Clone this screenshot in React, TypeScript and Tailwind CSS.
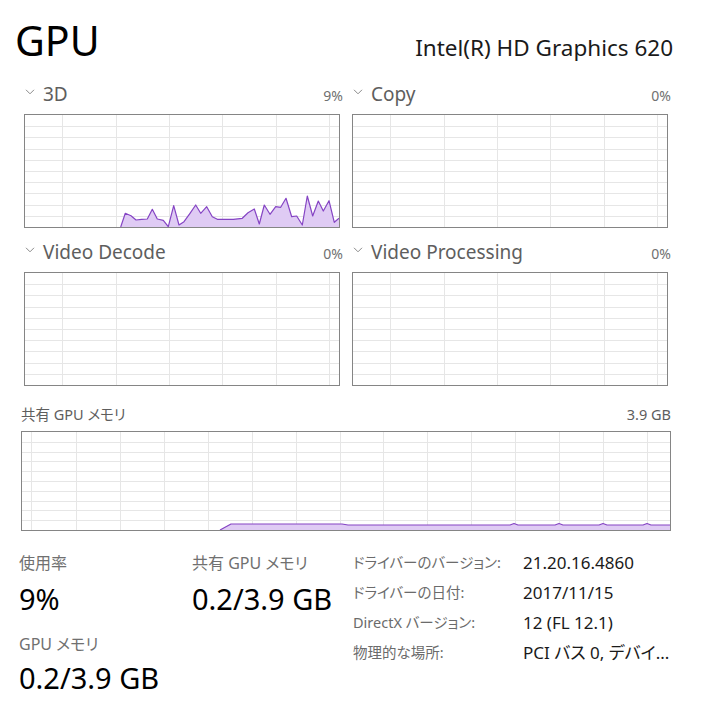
import React from "react";

// GPU performance page, Task Manager style

const SMALL_X = [37, 91, 144, 197, 251, 304];
const WIDE_X = [9, 54, 98, 142, 186, 230, 274, 318, 361, 405, 449, 493, 537, 581, 625];

const load3d: [number, number][] = [
  [95.7, 112], [100.3, 98.3], [106, 100.7], [111, 105], [116.7, 104.3], [122.3, 104],
  [127.3, 94.3], [132.3, 104], [138.3, 105.3], [143.3, 111.7], [148.7, 90.7], [154, 110],
  [159, 106.7], [165, 98.3], [170.7, 90], [175.7, 98.3], [181.7, 91.7], [187.3, 101.7],
  [192.3, 104.3], [208.3, 104.3], [217.3, 103.3], [223, 97.7], [229.3, 94], [234.3, 109],
  [239.3, 90], [245, 99.3], [250.7, 91.7], [255.7, 92.3], [261, 83.3], [266.7, 101.7],
  [271.7, 101], [277.3, 110], [282.3, 81], [287.7, 101], [293.3, 86], [298.3, 96],
  [304, 85.7], [309.3, 107.3], [314, 103.3],
];

const sharedMem: [number, number][] = [
  [198, 98], [209, 92], [320, 92], [326, 93], [488, 93], [492, 91.5], [496, 93], [533, 93],
  [537, 91.5], [541, 93], [577, 93], [581, 91.5], [585, 93], [621, 93], [625, 91.5],
  [629, 93], [648, 93],
];

const pts = (p: [number, number][]) => p.map(([x, y]) => `${x},${y}`).join(" ");

interface GridProps {
  w: number;
  h: number;
  xs: number[];
  rows: number;
  data?: [number, number][];
}

const Grid = ({ w, h, xs, rows, data }: GridProps) => (
  <svg width={w} height={h} className="block">
    {xs.map((x) => (
      <line key={"v" + x} x1={x + 0.5} x2={x + 0.5} y1={0} y2={h} stroke="#e6e6e6" strokeWidth={1} />
    ))}
    {Array.from({ length: rows - 1 }, (_, i) => {
      const y = Math.round(((i + 1) * h) / rows) + 0.5;
      return <line key={"h" + i} x1={0} x2={w} y1={y} y2={y} stroke="#e6e6e6" strokeWidth={1} />;
    })}
    {data && (
      <>
        <polygon
          points={pts([...data, [data[data.length - 1][0], h], [data[0][0], h]])}
          fill="#dfcbf4"
        />
        <polyline points={pts(data)} fill="none" stroke="#8544c4" strokeWidth={1.2} strokeLinejoin="round" />
      </>
    )}
  </svg>
);

const Chevron = () => (
  <svg width="10" height="6" viewBox="0 0 10 6" className="block mr-[8px] -translate-y-[6px]">
    <path d="M1 0.8 L5 4.8 L9 0.8" fill="none" stroke="#8a8a8a" strokeWidth="1" />
  </svg>
);

const EngineChart = ({ name, pct, data }: { name: string; pct: string; data?: [number, number][] }) => (
  <div className="flex flex-col">
    <div className="flex h-[34px] w-[319px] items-baseline justify-between pt-[2px] pl-[1px]">
      <div className="flex items-baseline">
        <Chevron />
        <span className="text-[19px] leading-[24px] text-[#5e5e5e]">{name}</span>
      </div>
      <span className="text-[14px] leading-[24px] text-[#707070]">{pct}</span>
    </div>
    <div className="w-[316px] h-[114px] border border-[#858585]">
      <Grid w={314} h={112} xs={SMALL_X} rows={10} data={data} />
    </div>
  </div>
);

const details = [
  ["ドライバーのバージョン:", "21.20.16.4860"],
  ["ドライバーの日付:", "2017/11/15"],
  ["DirectX バージョン:", "12 (FL 12.1)"],
  ["物理的な場所:", "PCI バス 0, デバイ..."],
];

export default function App() {
  return (
    <div className="w-[707px] h-[706px] bg-white overflow-hidden text-[#1a1a1a] font-['Noto_Sans','Noto_Sans_CJK_JP',sans-serif] [font-feature-settings:'palt']">
      <div className="flex h-[80px] items-baseline justify-between pl-[15px] pr-[34px]">
        <span className="mt-[19px] text-[41px] leading-[42px] text-black">GPU</span>
        <span className="text-[22.5px] leading-[28px] text-[#1a1a1a]">Intel(R) HD Graphics 620</span>
      </div>

      <div className="grid grid-cols-[319px_319px] gap-x-[9px] gap-y-[10px] pl-[24px]">
        <EngineChart name="3D" pct="9%" data={load3d} />
        <EngineChart name="Copy" pct="0%" />
        <EngineChart name="Video Decode" pct="0%" />
        <EngineChart name="Video Processing" pct="0%" />
      </div>

      <div className="pl-[21px] w-[671px]">
        <div className="flex h-[45px] items-end justify-between pb-[7px] text-[14.5px] leading-[20px] text-[#5e5e5e]">
          <span>共有 GPU メモリ</span>
          <span>3.9 GB</span>
        </div>
        <div className="w-[650px] h-[100px] border border-[#858585]">
          <Grid w={648} h={98} xs={WIDE_X} rows={10} data={sharedMem} />
        </div>
      </div>

      <div className="flex mt-[17px] pl-[19px]">
        <div className="w-[173px] pt-[5px]">
          <div className="text-[16px] leading-[20px] text-[#707070]">使用率</div>
          <div className="mt-[9px] text-[29px] leading-[34px] text-black">9%</div>
          <div className="mt-[18px] text-[16px] leading-[20px] text-[#707070]">GPU メモリ</div>
          <div className="mt-[7px] text-[29px] leading-[34px] text-black">0.2/3.9 GB</div>
        </div>
        <div className="w-[161px] pt-[5px]">
          <div className="text-[16px] leading-[20px] text-[#707070]">共有 GPU メモリ</div>
          <div className="mt-[9px] text-[29px] leading-[34px] text-black">0.2/3.9 GB</div>
        </div>
        <div className="flex flex-col">
          {details.map(([k, v]) => (
            <div key={k} className="flex h-[30px] items-center">
              <span className="w-[170px] text-[14.5px] text-[#6b6b6b]">{k}</span>
              <span className="text-[17px] text-[#1a1a1a]">{v}</span>
            </div>
          ))}
        </div>
      </div>
    </div>
  );
}
